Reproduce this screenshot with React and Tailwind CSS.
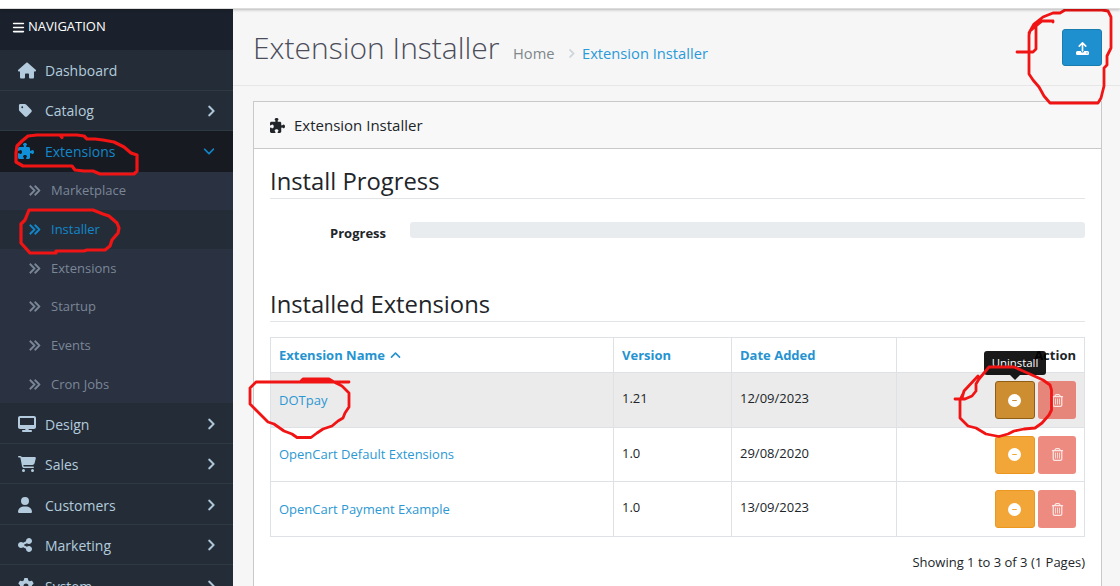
import React from "react";
import {
  FaBars, FaHouse, FaTag, FaPuzzlePiece, FaDesktop, FaCartShopping, FaUser,
  FaShareNodes, FaGear, FaAngleRight, FaAngleDown, FaAngleUp, FaAnglesRight,
  FaCircleMinus, FaRegTrashCan, FaUpload,
} from "react-icons/fa6";

function NavItem({ icon, label, arrow = true, active = false, pad = "pt-[1.5px]" }) {
  return (
    <li
      className={
        "flex h-[40.5px] items-center border-b pl-[18px] pr-[19px] text-[14px] " +
        (active ? "border-[#171b21] bg-[#171b21] text-[#1287cb]" : "border-[#2d3a41] bg-[#242d37] text-[#b3cbdd]")
      }
    >
      <span className={"flex w-[27px] shrink-0 pt-px " + (active ? "text-[#1090d8]" : "")}>{icon}</span>
      <span className={"flex-1 " + pad}>{label}</span>
      {arrow && (active ? <FaAngleDown className="mr-[-2px] size-[14px]" /> : <FaAngleRight className="mr-[-4px] mt-px size-[14px]" strokeWidth="12" />)}
    </li>
  );
}

function SubItem({ label, active = false }) {
  return (
    <li
      className={
        "flex h-[38.67px] items-center pl-[28px] text-[13px] " +
        (active ? "bg-[#242d37] text-[#1287cb]" : "text-[#7a8797]")
      }
    >
      <FaAnglesRight className="mr-[10px] size-[13px]" strokeWidth="20" />
      <span className="pt-[0.7px]">{label}</span>
    </li>
  );
}

function Sidebar() {
  return (
    <nav className="w-[233px] shrink-0 overflow-hidden bg-[#1b212c]">
      <div className="flex h-[41px] items-center pb-[5px] pl-[12px] text-[13px] text-white">
        <FaBars className="mr-[3px] size-[13px]" />
        NAVIGATION
      </div>
      <ul>
        <NavItem icon={<FaHouse className="h-[17px] w-[18px]" />} label="Dashboard" arrow={false} />
        <NavItem icon={<FaTag className="size-[15px]" />} label="Catalog" pad="pt-0" />
        <NavItem icon={<FaPuzzlePiece className="size-[16px]" />} label="Extensions" active />
      </ul>
      <ul className="bg-[#2a3141]">
        <SubItem label="Marketplace" />
        <SubItem label="Installer" active />
        <SubItem label="Extensions" />
        <SubItem label="Startup" />
        <SubItem label="Events" />
        <SubItem label="Cron Jobs" />
      </ul>
      <ul>
        <NavItem icon={<FaDesktop className="size-[18px]" />} label="Design" pad="pt-[3px]" />
        <NavItem icon={<FaCartShopping className="size-[18px]" />} label="Sales" pad="pt-[2px]" />
        <NavItem icon={<FaUser className="h-[16px] w-[14px]" />} label="Customers" pad="pt-[3px]" />
        <NavItem icon={<FaShareNodes className="h-[16px] w-[14px]" />} label="Marketing" pad="pt-[2px]" />
        <NavItem icon={<FaGear className="size-[16px]" />} label="System" pad="pt-[3px]" />
      </ul>
    </nav>
  );
}

function PageHeader() {
  return (
    <header className="flex h-[76px] items-center border-b border-[#e6e6e6] pl-[20px] pr-[18px]">
      <h1 className="w-[260px] whitespace-nowrap pb-[1px] text-[30px] font-light text-[#4c4d5a]">Extension Installer</h1>
      <div className="flex flex-1 items-center pt-[11px] text-[14.7px]">
        <span className="text-[#7f868c]">Home</span>
        <FaAngleRight className="ml-[11px] mr-[5.5px] mt-[2px] size-[11px] text-[#cfd6dd]" strokeWidth="30" />
        <span className="text-[#2a9ad9]">Extension Installer</span>
      </div>
      <button className="flex h-[37px] w-[40px] items-center justify-center rounded-[3px] border border-[#197cae] bg-[#1f90cf] pt-px text-white">
        <FaUpload className="size-[13px]" />
      </button>
    </header>
  );
}

const rows = [
  { name: "DOTpay", version: "1.21", date: "12/09/2023", hover: true, height: "h-[55px]" },
  { name: "OpenCart Default Extensions", version: "1.0", date: "29/08/2020", height: "h-[54px]" },
  { name: "OpenCart Payment Example", version: "1.0", date: "13/09/2023", height: "h-[55px]" },
];

const grid = "grid grid-cols-[343px_118px_165px_187px] border-b border-[#dee2e6] ";

function Row({ row }) {
  return (
    <div className={grid + row.height + (row.hover ? " bg-[#ebebeb]" : "")}>
      <div className="flex items-center border-r border-[#dee2e6] pl-[8px] pt-px text-[#2c98d3]">{row.name}</div>
      <div className="flex items-center border-r border-[#dee2e6] pb-[2px] pl-[8px]">{row.version}</div>
      <div className="flex items-center border-r border-[#dee2e6] pb-[2px] pl-[8px]">{row.date}</div>
      <div className="flex items-center justify-end gap-[3px] pr-[8px]">
        <div
          className={
            "relative flex h-[38px] w-[40px] items-center justify-center rounded-[3px] border text-white " +
            (row.hover ? "border-[#8f5e14] bg-[#cd8d31]" : "border-[#ec971f] bg-[#f2a638]")
          }
        >
          <FaCircleMinus className="mr-px size-[13px]" />
          {row.hover && (
            <div className="absolute left-[-12px] top-[-31px] flex h-[24px] w-[62px] items-center justify-center rounded-[3px] bg-black/90 text-[11.4px] text-white">
              Uninstall
              <span className="absolute left-[26px] top-[24px] border-x-[5px] border-t-[5px] border-x-transparent border-t-black/90" />
            </div>
          )}
        </div>
        <div className={"flex h-[38px] w-[38px] items-center justify-center rounded-[3px] text-white/80 " + (row.hover ? "bg-[#e68579]" : "bg-[#ed8b81]")}>
          <FaRegTrashCan className="size-[13px]" />
        </div>
      </div>
    </div>
  );
}

function Panel() {
  return (
    <section className="ml-[20px] mt-[15px] h-[520px] w-[849px] border border-[#c9c9c9] bg-white">
      <div className="flex h-[47px] items-center border-b border-[#c9c9c9] bg-[#f8f8f8] pl-[16px] text-[15px] text-[#212529]">
        <FaPuzzlePiece className="mr-[9px] size-[15px]" />
        Extension Installer
      </div>
      <div className="px-[16px] pt-[16px] text-[13px] text-[#212529]">
        <h2 className="flex h-[34px] items-center border-b border-[#e3e4e6] text-[23.8px]">Install Progress</h2>
        <div className="mt-[23px] flex h-[22px]">
          <span className="w-[116px] pt-[2px] text-right font-bold">Progress</span>
          <div className="ml-[24px] h-[16px] flex-1 rounded-[3px] bg-[#e9ecef]" />
        </div>
        <h2 className="mt-[44px] flex h-[34px] items-center border-b border-[#e3e4e6] text-[23.8px]">Installed Extensions</h2>
        <div className="mt-[15px] border-l border-t border-r border-[#dee2e6]">
          <div className={grid + "h-[35px] font-bold text-[#2693d1]"}>
            <div className="flex items-center border-r border-[#dee2e6] pl-[8px] pt-[2px]">
              Extension Name
              <FaAngleUp className="mb-px ml-[4px] size-[13px]" />
            </div>
            <div className="flex items-center border-r border-[#dee2e6] pl-[8px] pt-[2px]">Version</div>
            <div className="flex items-center border-r border-[#dee2e6] pl-[8px] pt-[2px]">Date Added</div>
            <div className="flex items-center justify-end pr-[8px] pt-[2px] text-[#212529]">Action</div>
          </div>
          {rows.map((row) => <Row key={row.name} row={row} />)}
        </div>
        <p className="mt-[15px] text-right leading-[20px]">Showing 1 to 3 of 3 (1 Pages)</p>
      </div>
    </section>
  );
}

function Markings() {
  return (
    <svg className="pointer-events-none absolute inset-0" width="1120" height="586" fill="none" stroke="#f01414" strokeWidth="2.8" strokeLinejoin="round" strokeLinecap="round">
      <path strokeWidth="3.2" d="M62 137.5L60 135H37L28 136L22 141L17 146L16 153V162L23 166H72L75 170L84 171L93 171L100 174H134L137 171V155L131 153L124 147L114 142L103 140L95 139H87L84 136L77 135H37" />
      <path strokeWidth="3.2" d="M29 210H93L98 212L103 214L109 216L117 223L119 228L118 233L112 240L110 246L105 250H87L84 251H56V253H30L21 243V224L25 220Z" />
      <path d="M1017 52H1033L1036 49V26L1038 21H1053V22M1052 21H1042L1030 31L1029 35V74L1033 80L1039 87L1044 96L1050 103H1098L1101 98L1104 86V68L1107 65V56L1111 48V17L1108 11L1102 10H1065L1060 13H1053L1043 17L1034 24L1029 33" />
      <path d="M349 382H256L250 388V404L268 422L274 424L284 431L292 434L297 437.5H311L317 433L323 429L332 426L338 421L343 418L345 413L349 407V393L342 386L334 382L329 379H303L301 381" />
      <path d="M978 376L964 391L962 398M955 399H965L972 396L976 391V384L979 379L989 367H1014L1023 371L1032 375L1043 380L1050 385L1051.5 390V410L1049 415L1042 423L1035 428L1024 429L1014 431L1008 434L999 436.5L986 434L976 428L968 426L960 418V400L963 394" />
    </svg>
  );
}

export default function App() {
  return (
    <div className="relative flex h-[586px] w-[1120px] flex-col overflow-hidden bg-[#f6f6f6] font-['Open_Sans',sans-serif]">
      <div className="z-10 h-[9px] shrink-0 border-b border-[#dcdcdc] bg-white shadow-[0_1px_3px_rgba(0,0,0,0.25)]" />
      <div className="flex min-h-0 flex-1">
        <Sidebar />
        <main className="min-w-0 flex-1 pt-px">
          <PageHeader />
          <Panel />
        </main>
      </div>
      <Markings />
    </div>
  );
}
